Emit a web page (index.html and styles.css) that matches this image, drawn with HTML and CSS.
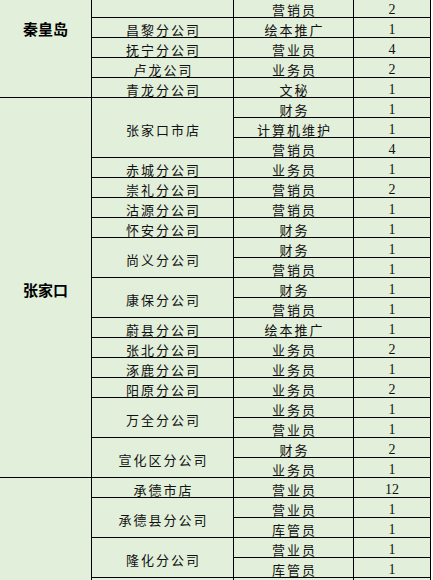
FILE: index.html
```html
<!DOCTYPE html>
<html lang="zh">
<head>
<meta charset="utf-8">
<title>人员需求表</title>
<link rel="stylesheet" href="styles.css">
</head>
<body>
<div class="sheet">
  <div class="cell c1 region top span5">秦皇岛</div>
  <div class="cell c2"></div><div class="cell c3">营销员</div><div class="cell c4">2</div>
  <div class="cell c2">昌黎分公司</div><div class="cell c3">绘本推广</div><div class="cell c4">1</div>
  <div class="cell c2">抚宁分公司</div><div class="cell c3">营业员</div><div class="cell c4">4</div>
  <div class="cell c2">卢龙公司</div><div class="cell c3">业务员</div><div class="cell c4">2</div>
  <div class="cell c2">青龙分公司</div><div class="cell c3">文秘</div><div class="cell c4">1</div>

  <div class="cell c1 region span19">张家口</div>
  <div class="cell c2 span3">张家口市店</div><div class="cell c3">财务</div><div class="cell c4">1</div>
  <div class="cell c3">计算机维护</div><div class="cell c4">1</div>
  <div class="cell c3">营销员</div><div class="cell c4">4</div>
  <div class="cell c2">赤城分公司</div><div class="cell c3">业务员</div><div class="cell c4">1</div>
  <div class="cell c2">崇礼分公司</div><div class="cell c3">营销员</div><div class="cell c4">2</div>
  <div class="cell c2">沽源分公司</div><div class="cell c3">营销员</div><div class="cell c4">1</div>
  <div class="cell c2">怀安分公司</div><div class="cell c3">财务</div><div class="cell c4">1</div>
  <div class="cell c2 span2">尚义分公司</div><div class="cell c3">财务</div><div class="cell c4">1</div>
  <div class="cell c3">营销员</div><div class="cell c4">1</div>
  <div class="cell c2 span2">康保分公司</div><div class="cell c3">财务</div><div class="cell c4">1</div>
  <div class="cell c3">营销员</div><div class="cell c4">1</div>
  <div class="cell c2">蔚县分公司</div><div class="cell c3">绘本推广</div><div class="cell c4">1</div>
  <div class="cell c2">张北分公司</div><div class="cell c3">业务员</div><div class="cell c4">2</div>
  <div class="cell c2">涿鹿分公司</div><div class="cell c3">业务员</div><div class="cell c4">1</div>
  <div class="cell c2">阳原分公司</div><div class="cell c3">业务员</div><div class="cell c4">2</div>
  <div class="cell c2 span2">万全分公司</div><div class="cell c3">业务员</div><div class="cell c4">1</div>
  <div class="cell c3">营业员</div><div class="cell c4">1</div>
  <div class="cell c2 span2">宣化区分公司</div><div class="cell c3">财务</div><div class="cell c4">2</div>
  <div class="cell c3">业务员</div><div class="cell c4">1</div>

  <div class="cell c1 region span6"></div>
  <div class="cell c2">承德市店</div><div class="cell c3">营业员</div><div class="cell c4">12</div>
  <div class="cell c2 span2">承德县分公司</div><div class="cell c3">营业员</div><div class="cell c4">1</div>
  <div class="cell c3">库管员</div><div class="cell c4">1</div>
  <div class="cell c2 span2">隆化分公司</div><div class="cell c3">营业员</div><div class="cell c4">1</div>
  <div class="cell c3">库管员</div><div class="cell c4">1</div>
  <div class="cell c2"></div><div class="cell c3"></div><div class="cell c4"></div>
</div>
</body>
</html>
```

FILE: styles.css
```css
html, body {
  margin: 0;
  padding: 0;
  background: #ffffff;
  overflow: hidden;
  height: 580px;
}

.sheet {
  display: grid;
  grid-template-columns: 91px 141px 119px 76px;
  grid-auto-rows: 19px;
  gap: 1px;
  padding-right: 1px;
  background: #000000;
  width: max-content;
  margin-top: -2px;
}

.cell {
  background: #e2efda;
  display: flex;
  align-items: center;
  justify-content: center;
  box-sizing: border-box;
  padding-top: 4px;
  padding-left: 2px;
  font-family: "Noto Sans CJK SC", "Noto Sans", sans-serif;
  font-size: 13px;
  line-height: 1;
  letter-spacing: 2px;
  color: #111111;
  white-space: nowrap;
}

.c1 { grid-column: 1; }
.c2 { grid-column: 2; }
.c3 { grid-column: 3; }
.c4 {
  grid-column: 4;
  font-family: "Liberation Serif", "Times New Roman", serif;
  font-size: 14px;
  letter-spacing: 0;
  padding-left: 0;
}

.region {
  font-weight: bold;
  font-size: 15px;
  letter-spacing: 0;
  padding-left: 0;
  color: #000000;
}

.region.top {
  align-items: flex-start;
  padding-top: 23px;
}

.span2 { grid-row: span 2; }
.span3 { grid-row: span 3; }
.span5 { grid-row: span 5; }
.span6 { grid-row: span 6; }
.span19 { grid-row: span 19; }
```
